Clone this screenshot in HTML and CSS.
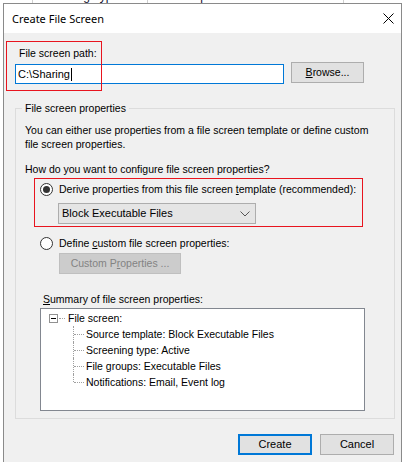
FILE: index.html
```html
<!DOCTYPE html>
<html>
<head>
<meta charset="utf-8">
<link rel="stylesheet" href="styles.css">
</head>
<body>
<div class="backdrop">
  <div class="hcell h0"></div>
  <div class="hcell h1"><span>Screening Type</span></div>
  <div class="hcell h2"><span>File Groups</span></div>
  <div class="hcell h3"><span>Source Te</span></div>
</div>
<div class="dialog">
  <div class="titlebar">
    <span class="title">Create File Screen</span>
    <svg class="close" width="11" height="11" viewBox="0 0 11 11"><path d="M0.5 0.5L10.5 10.5M10.5 0.5L0.5 10.5" stroke="#000" stroke-width="1" fill="none"/></svg>
  </div>
  <div class="content">
    <div class="path-label">File screen path:</div>
    <div class="path-row">
      <div class="input">C:\Sharing<span class="caret"></span></div>
      <div class="btn browse"><span><u>B</u>rowse...</span></div>
    </div>
    <fieldset class="group">
      <legend>File screen properties</legend>
      <div class="group-inner">
        <p class="intro">You can either use properties from a file screen template or define custom<br>file screen properties.</p>
        <p class="question">How do you want to configure file screen properties?</p>
        <div class="radio-row r1"><span class="radio checked"></span><span>Derive properties from this file screen <u>t</u>emplate (recommended):</span></div>
        <div class="select"><span>Block Executable Files</span><svg class="chev" width="10" height="6" viewBox="0 0 10 6"><path d="M0.5 0.5L5 5L9.5 0.5" stroke="#555" stroke-width="1" fill="none"/></svg></div>
        <div class="radio-row r2"><span class="radio"></span><span>Define <u>c</u>ustom file screen properties:</span></div>
        <div class="btn disabled custom"><span>Custom P<u>r</u>operties ...</span></div>
        <div class="summary-label"><u>S</u>ummary of file screen properties:</div>
        <div class="tree">
          <div class="tree-root"><span class="expander"></span><span class="root-dots"></span><span>File screen:</span></div>
          <div class="tree-children">
            <div class="tree-item">Source template: Block Executable Files</div>
            <div class="tree-item">Screening type: Active</div>
            <div class="tree-item">File groups: Executable Files</div>
            <div class="tree-item last">Notifications: Email, Event log</div>
          </div>
        </div>
      </div>
    </fieldset>
    <div class="footer">
      <div class="btn default"><span>Create</span></div>
      <div class="btn"><span>Cancel</span></div>
    </div>
  </div>
  <div class="mark mark1"></div>
  <div class="mark mark2"></div>
</div>
</body>
</html>
```
FILE: styles.css
```css
* { box-sizing: border-box; }
html, body { margin: 0; padding: 0; }
body {
  background: #fff;
  font-family: "Liberation Sans", Arial, sans-serif;
  font-size: 10.5px;
  line-height: 13px;
  color: #000;
  width: 404px;
  height: 462px;
  overflow: hidden;
}
.backdrop {
  height: 3px;
  overflow: hidden;
  display: flex;
}
.hcell {
  height: 3px;
  overflow: hidden;
  font-size: 12px;
  line-height: 14px;
  color: #101030;
}
.hcell span { display: block; margin-top: -11px; padding-left: 3px; white-space: nowrap; }
.h0 { width: 32px; }
.h1 { width: 115px; border-left: 1px solid #d0d0d0; }
.h2 { width: 196px; border-left: 1px solid #d0d0d0; }
.h3 { width: 61px; border-left: 1px solid #d0d0d0; }

.dialog {
  margin-left: 3px;
  width: 399px;
  border: 1px solid #8a8a8a;
  background: #f0f0f0;
  position: relative;
}
.titlebar {
  height: 29px;
  background: #fff;
  display: flex;
  align-items: center;
  justify-content: space-between;
  padding: 0 7px 0 8px;
}
.title {
  font-family: "Noto Sans", "Open Sans", sans-serif;
  font-size: 11px;
  line-height: 16px;
}
.close { display: block; margin-top: -1px; }

.content { padding: 14px 0 7px 0; }
.path-label { margin-left: 15px; }
.path-row {
  display: flex;
  align-items: flex-start;
  margin: 2px 0 0 11px;
}
.input {
  margin-top: 2px;
  width: 269px;
  height: 20px;
  border: 1px solid #0078d7;
  background: #fff;
  padding: 0 2px;
  line-height: 18px;
  font-size: 11px;
  display: flex;
  align-items: center;
}
.caret {
  display: inline-block;
  width: 1px;
  height: 13px;
  background: #000;
  margin-left: 1px;
}
.btn {
  height: 21px;
  border: 1px solid #adadad;
  background: #e1e1e1;
  display: flex;
  align-items: center;
  justify-content: center;
}
.browse { margin-left: 7px; width: 73px; }

.group {
  margin: 18px 0 0 11px;
  width: 380px;
  border: 1px solid #dcdcdc;
  padding: 0 0 7px 0;
  min-width: 0;
}
.group legend {
  margin-left: 6px;
  padding: 0 3px;
  line-height: 13px;
}
.group-inner { padding-left: 9px; }
.group-inner p { margin: 0; }
.intro { margin-top: 8px !important; line-height: 14px; }
.question { margin-top: 12px !important; }
.radio-row {
  display: flex;
  align-items: center;
  gap: 6px;
  margin-left: 15px;
  height: 13px;
}
.r1 { margin-top: 7px; }
.r2 { margin-top: 13px; }
.radio {
  width: 13px;
  height: 13px;
  border: 1px solid #333;
  border-radius: 50%;
  background: #fff;
  display: flex;
  align-items: center;
  justify-content: center;
  flex: none;
}
.radio.checked::after {
  content: "";
  width: 7px;
  height: 7px;
  border-radius: 50%;
  background: #333;
}
.select {
  margin: 7px 0 0 33px;
  width: 198px;
  height: 21px;
  border: 1px solid #adadad;
  background: #e5e5e5;
  display: flex;
  align-items: center;
  justify-content: space-between;
  padding: 0 5px 0 3px;
  font-size: 11px;
}
.chev { display: block; }
.custom {
  margin: 3px 0 0 34px;
  width: 122px;
}
.btn.disabled {
  background: #cccccc;
  border-color: #bfbfbf;
  color: #838383;
}
.summary-label { margin: 19px 0 0 18px; }
.tree {
  margin: 2px 0 0 15px;
  width: 325px;
  height: 103px;
  border: 1px solid #828790;
  background: #fff;
  padding: 1px 0 0 8px;
}
.tree-root {
  display: flex;
  align-items: center;
  height: 16px;
  line-height: 16px;
}
.expander {
  width: 9px;
  height: 9px;
  border: 1px solid #919191;
  position: relative;
  flex: none;
}
.expander::after {
  content: "";
  position: absolute;
  left: 1px;
  top: 3px;
  width: 5px;
  height: 1px;
  background: #000;
}
.root-dots {
  width: 6px;
  border-top: 1px dotted #a0a0a0;
  margin: 1px 3px 0 1px;
}
.tree-children { margin-left: 24px; }
.tree-item {
  position: relative;
  height: 16px;
  line-height: 16px;
  padding-left: 13px;
}
.tree-item::before {
  content: "";
  position: absolute;
  left: 0;
  top: 0;
  bottom: 0;
  border-left: 1px dotted #a0a0a0;
}
.tree-item.last::before { bottom: 8px; }
.tree-item::after {
  content: "";
  position: absolute;
  left: 1px;
  top: 8px;
  width: 10px;
  border-top: 1px dotted #a0a0a0;
}
.footer {
  display: flex;
  justify-content: flex-end;
  gap: 8px;
  margin-top: 15px;
  padding-right: 7px;
}
.footer .btn { width: 74px; font-size: 11px; }
.btn.default { border: 2px solid #0078d7; }

.mark {
  position: absolute;
  border: 1px solid #e8141e;
  pointer-events: none;
}
.mark1 { left: 2px; top: 37px; width: 96px; height: 50px; }
.mark2 { left: 30px; top: 174px; width: 329px; height: 49px; }
```
